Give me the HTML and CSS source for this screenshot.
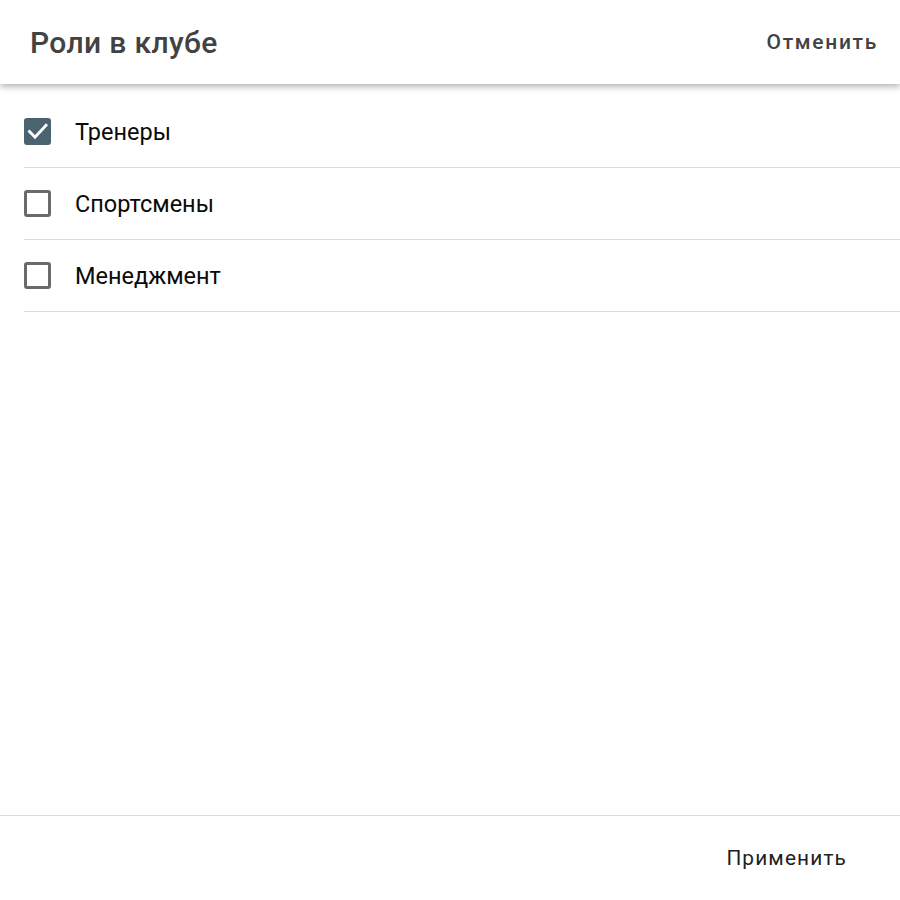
FILE: index.html
```html
<!DOCTYPE html>
<html lang="ru">
<head>
    <meta charset="UTF-8">
    <meta name="viewport" content="width=device-width, initial-scale=1.0">
    <title>Роли в клубе</title>
    <link rel="stylesheet" href="styles.css">
</head>
<body>
    <div class="dialog">
        <header class="dialog-header">
            <h1 class="dialog-title">Роли в клубе</h1>
            <button class="text-btn cancel-btn">Отменить</button>
        </header>

        <main class="role-list">
            <label class="role-row">
                <span class="check checked">
                    <svg viewBox="0 0 27 27" width="27" height="27"><path d="M4.5 12.5l6.5 6.8L23 6.2" fill="none" stroke="#fff" stroke-width="2.8"/></svg>
                </span>
                <span class="role-name">Тренеры</span>
            </label>
            <label class="role-row">
                <span class="check"></span>
                <span class="role-name">Спортсмены</span>
            </label>
            <label class="role-row">
                <span class="check"></span>
                <span class="role-name">Менеджмент</span>
            </label>
        </main>

        <footer class="dialog-footer">
            <button class="text-btn apply-btn">Применить</button>
        </footer>
    </div>
</body>
</html>
```

FILE: styles.css
```css
html, body {
    margin: 0;
    height: 100%;
    background-color: white;
    font-family: Roboto, "Noto Sans", sans-serif;
}

.dialog {
    height: 900px;
    display: flex;
    flex-direction: column;
}

.dialog-header {
    height: 84px;
    flex-shrink: 0;
    display: flex;
    align-items: center;
    justify-content: space-between;
    padding: 0 22px 0 30px;
    box-sizing: border-box;
    box-shadow: 0 3px 6px rgba(0, 0, 0, 0.28);
    position: relative;
    z-index: 1;
}

.dialog-title {
    margin: 0;
    font-size: 30px;
    font-weight: 500;
    letter-spacing: 0.35px;
    color: #424242;
}

.text-btn {
    background: none;
    border: none;
    padding: 0;
    font-family: Roboto, "Noto Sans", sans-serif;
    font-weight: 500;
    cursor: pointer;
}

.cancel-btn {
    font-size: 21px;
    letter-spacing: 1.7px;
    color: #424242;
}

.role-list {
    flex: 1;
    padding: 12px 0 0 24px;
}

.role-row {
    height: 72px;
    display: flex;
    align-items: center;
    border-bottom: 1px solid #dcdcdc;
    box-sizing: border-box;
}

.check {
    width: 27px;
    height: 27px;
    box-sizing: border-box;
    border: 3px solid #6a6a6a;
    border-radius: 3px;
    flex-shrink: 0;
}

.check.checked {
    background-color: #4b6271;
    border: none;
}

.check svg {
    display: block;
}

.role-name {
    margin-left: 24px;
    font-size: 23.5px;
    color: #0a0a0a;
}

.dialog-footer {
    height: 84px;
    flex-shrink: 0;
    border-top: 1px solid #dcdcdc;
    display: flex;
    align-items: center;
    justify-content: flex-end;
    padding-right: 53px;
}

.apply-btn {
    font-size: 20.8px;
    font-weight: 400;
    letter-spacing: 1.15px;
    color: #212121;
}
```
